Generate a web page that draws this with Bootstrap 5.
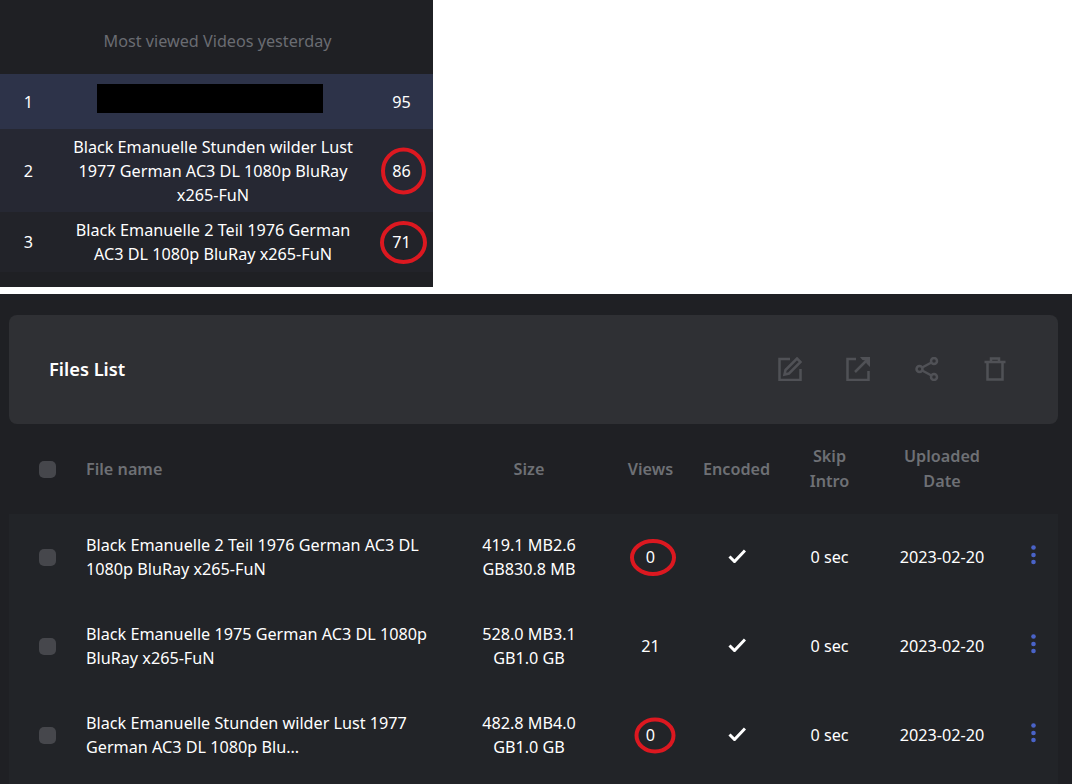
<!DOCTYPE html>
<html lang="en">
<head>
<meta charset="utf-8">
<title>Files</title>
<link href="https://cdn.jsdelivr.net/npm/bootstrap@5.3.0/dist/css/bootstrap.min.css" rel="stylesheet">
<style>
html,body{height:784px;overflow:hidden}
body{background:#fff;font-family:"Noto Sans","Open Sans",sans-serif;font-size:16.2px;line-height:24px;color:#fff}
.top-panel{width:433px;height:287px;background:#1f2024;margin-bottom:7px}
.top-title{height:74px;color:#6a6c72;line-height:82px;padding-left:2px}
.rank-table,.file-table{table-layout:fixed;margin:0;--bs-table-bg:transparent;--bs-table-color:#fff;color:#fff;border-color:transparent;font-size:16.2px}
.rank-table{width:433px}
.rank-table td{padding:5.5px 16px;vertical-align:middle;border:0;background:transparent;color:#fff;box-shadow:none}
.rank-1 td{background:#2d3349}
.rank-2 td{background:#262833}
.rank-3 td{background:#222329;padding:6px 16px}
.c-rank{width:56px}
.c-count{width:63px}
.rank-table td.cell-rank{padding:0 0 0 1px;text-align:center}
.rank-table td.cell-count{padding:0;text-align:center}
.rank-table td.cell-redact{padding:10px 0 16px}
.redact{width:226px;height:29px;background:#000;margin-left:41px}
.num-wrap{position:relative;display:inline-block}
.ring{position:absolute;left:50%;top:50%;overflow:visible;fill:none;stroke:#dc1820;stroke-width:4;pointer-events:none}
.ring-86{width:44px;height:46px;transform:translate(-20.5px,-23px)}
.ring-71{width:46px;height:42px;transform:translate(-21.5px,-20.5px)}
.ring-0a{width:45px;height:37px;transform:translate(-19.5px,-18px)}
.ring-0b{width:40px;height:36px;transform:translate(-15px,-17.5px)}
.file-panel{height:490px;background:#1f2024;padding:21px 14px 0 9px}
.list-head{height:109px;background:#2f3034;border-radius:8px;padding:0 51px 0 40px}
.list-title{font-size:18.3px;font-weight:600;margin-top:-1px}
.tool-row{gap:44.5px;margin-top:-2px}
.tool{width:24px;height:24px;fill:none;stroke:#505156;stroke-width:2.5;display:block}
.tool .solid{fill:#505156;stroke:none}
.file-table{width:1049px}
.file-table th,.file-table td{border:0;background:transparent;color:#fff;box-shadow:none;padding:0;vertical-align:middle;text-align:center}
.file-table thead th{height:90px;color:#6e7075;font-weight:600;line-height:25px}
.file-table tbody tr{background:#222428}
.file-table tbody td{height:89px;padding-bottom:3px}
.file-table tbody tr:last-child td{height:92px;padding-bottom:6px}
.file-table th.cell-name,.file-table td.cell-name{text-align:left;padding-left:16px;padding-right:16px}
.c-check{width:61px}.c-name{width:396px}.c-size{width:126px}.c-views{width:111px}.c-enc{width:67px}.c-skip{width:119px}.c-date{width:106px}.c-menu{width:63px}
.cell-size{padding-left:12px !important;padding-right:12px !important}
.cell-views{padding-left:6px !important}
.cell-menu{padding-left:13px !important}
.file-table .form-check-input{width:17px;height:17px;margin:0;background-color:#46474c;border:0;border-radius:5px;display:block;margin-left:30px}
.file-table td .form-check-input{margin-top:1px}
.tick{width:18px;height:14px;fill:none;stroke:#fff;stroke-width:3;display:inline-block;margin-bottom:6px}
.dots{width:5px;height:20px;fill:#4a63c8;display:inline-block;margin-bottom:5px}
</style>
</head>
<body>
<section class="top-panel">
  <div class="top-title text-center">Most viewed Videos yesterday</div>
  <table class="table rank-table">
    <colgroup><col class="c-rank"><col><col class="c-count"></colgroup>
    <tbody>
      <tr class="rank-1">
        <td class="cell-rank">1</td>
        <td class="cell-redact"><div class="redact"></div></td>
        <td class="cell-count">95</td>
      </tr>
      <tr class="rank-2">
        <td class="cell-rank">2</td>
        <td class="text-center">Black Emanuelle Stunden wilder Lust 1977 German AC3 DL 1080p BluRay x265-FuN</td>
        <td class="cell-count"><span class="num-wrap">86<svg class="ring ring-86" viewBox="0 0 44 46"><ellipse cx="22" cy="23" rx="20.5" ry="21.5"/></svg></span></td>
      </tr>
      <tr class="rank-3">
        <td class="cell-rank">3</td>
        <td class="text-center">Black Emanuelle 2 Teil 1976 German AC3 DL 1080p BluRay x265-FuN</td>
        <td class="cell-count"><span class="num-wrap">71<svg class="ring ring-71" viewBox="0 0 46 42"><ellipse cx="23" cy="21" rx="21.5" ry="19.5"/></svg></span></td>
      </tr>
    </tbody>
  </table>
</section>

<section class="file-panel">
  <div class="list-head d-flex align-items-center justify-content-between">
    <div class="list-title">Files List</div>
    <div class="d-flex tool-row">
      <svg class="tool" viewBox="0 0 24 24"><path d="M12 2H1.500v21h21V12"/><path d="M19 1.500l3.500 3.500L11 16.500l-4.500 1 1-4.500z"/></svg>
      <svg class="tool" viewBox="0 0 24 24"><path d="M10 2H1.500v21h21v-9"/><path d="M9 15L21 3"/><path class="solid" d="M14 0h10v10l-3.500-3.500-1-3-3-.5z"/></svg>
      <svg class="tool" viewBox="0 0 24 24"><circle cx="19" cy="4" r="3"/><circle cx="4.500" cy="12" r="3"/><circle cx="19" cy="20" r="3"/><path d="M7.200 10.500l9.200-5M7.200 13.500l9.200 5"/></svg>
      <svg class="tool" viewBox="0 0 24 24"><path d="M1.500 5h21M8 5V1.500h8V5M4.500 5v17.500h15V5"/></svg>
    </div>
  </div>
  <table class="table file-table">
    <colgroup><col class="c-check"><col class="c-name"><col class="c-size"><col class="c-views"><col class="c-enc"><col class="c-skip"><col class="c-date"><col class="c-menu"></colgroup>
    <thead>
      <tr>
        <th><input class="form-check-input" type="checkbox" aria-label="Select all"></th>
        <th class="cell-name">File name</th>
        <th class="cell-size">Size</th>
        <th class="cell-views">Views</th>
        <th>Encoded</th>
        <th>Skip<br>Intro</th>
        <th>Uploaded<br>Date</th>
        <th></th>
      </tr>
    </thead>
    <tbody>
      <tr>
        <td><input class="form-check-input" type="checkbox" aria-label="Select"></td>
        <td class="cell-name">Black Emanuelle 2 Teil 1976 German AC3 DL 1080p BluRay x265-FuN</td>
        <td class="cell-size">419.1 MB2.6 GB830.8 MB</td>
        <td class="cell-views"><span class="num-wrap">0<svg class="ring ring-0a" viewBox="0 0 45 37"><ellipse cx="22.500" cy="18.500" rx="21" ry="16.500"/></svg></span></td>
        <td><svg class="tick" viewBox="0 0 18 14"><path d="M1.500 7.500l5 5L17 1.500"/></svg></td>
        <td>0 sec</td>
        <td>2023-02-20</td>
        <td class="cell-menu"><svg class="dots" viewBox="0 0 5 20"><circle cx="2.500" cy="2.500" r="2.300"/><circle cx="2.500" cy="10" r="2.300"/><circle cx="2.500" cy="17" r="2.300"/></svg></td>
      </tr>
      <tr>
        <td><input class="form-check-input" type="checkbox" aria-label="Select"></td>
        <td class="cell-name">Black Emanuelle 1975 German AC3 DL 1080p BluRay x265-FuN</td>
        <td class="cell-size">528.0 MB3.1 GB1.0 GB</td>
        <td class="cell-views">21</td>
        <td><svg class="tick" viewBox="0 0 18 14"><path d="M1.500 7.500l5 5L17 1.500"/></svg></td>
        <td>0 sec</td>
        <td>2023-02-20</td>
        <td class="cell-menu"><svg class="dots" viewBox="0 0 5 20"><circle cx="2.500" cy="2.500" r="2.300"/><circle cx="2.500" cy="10" r="2.300"/><circle cx="2.500" cy="17" r="2.300"/></svg></td>
      </tr>
      <tr>
        <td><input class="form-check-input" type="checkbox" aria-label="Select"></td>
        <td class="cell-name">Black Emanuelle Stunden wilder Lust 1977 German AC3 DL 1080p Blu...</td>
        <td class="cell-size">482.8 MB4.0 GB1.0 GB</td>
        <td class="cell-views"><span class="num-wrap">0<svg class="ring ring-0b" viewBox="0 0 40 36"><ellipse cx="20" cy="18" rx="18.500" ry="16"/></svg></span></td>
        <td><svg class="tick" viewBox="0 0 18 14"><path d="M1.500 7.500l5 5L17 1.500"/></svg></td>
        <td>0 sec</td>
        <td>2023-02-20</td>
        <td class="cell-menu"><svg class="dots" viewBox="0 0 5 20"><circle cx="2.500" cy="2.500" r="2.300"/><circle cx="2.500" cy="10" r="2.300"/><circle cx="2.500" cy="17" r="2.300"/></svg></td>
      </tr>
    </tbody>
  </table>
</section>
<script src="https://cdn.jsdelivr.net/npm/bootstrap@5.3.0/dist/js/bootstrap.bundle.min.js"></script>
</body>
</html>
